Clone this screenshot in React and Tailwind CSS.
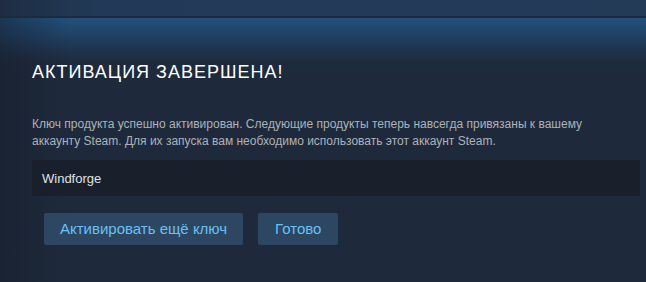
export default function App() {
  return (
    <div
      className="w-[646px] h-[282px] overflow-hidden bg-[#1e2a3c] flex flex-col"
      style={{ fontFamily: '"Liberation Sans", Arial, sans-serif' }}
    >
      <div className="h-[16px] shrink-0 bg-[linear-gradient(90deg,#1e2d44_0%,#223a57_15%,#233b57_100%)]" />
      <div className="h-[2px] shrink-0 bg-[#1a2b40]" />
      <div className="flex-1 flex flex-col bg-[linear-gradient(180deg,#21507a_0px,#20456a_14px,#1f3551_30px,#1e2b3e_44px,#1e2a3c_60px)]">
        <div className="flex-1 flex flex-col bg-[linear-gradient(90deg,rgba(20,26,38,0.45)_0px,rgba(20,26,38,0)_70px)]">
          <h1 className="mt-[44px] ml-[32px] text-[18px] leading-[20px] tracking-[1px] text-white font-normal">
            АКТИВАЦИЯ ЗАВЕРШЕНА!
          </h1>
          <p className="mt-[34px] ml-[32px] w-[580px] text-[12px] leading-[17px] text-[#acb2b8]">
            Ключ продукта успешно активирован. Следующие продукты теперь навсегда привязаны к вашему аккаунту Steam. Для их запуска вам необходимо использовать этот аккаунт Steam.
          </p>
          <div className="mt-[10px] ml-[32px] w-[608px] h-[36px] shrink-0 bg-[#19202c] flex items-center pl-[10px] pt-[1px] text-[13px] text-[#dfe3e6]">
            Windforge
          </div>
          <div className="mt-[17px] ml-[44px] flex gap-[15px]">
            <button className="h-[32px] px-[16px] rounded-[2px] bg-[#2d4763] text-[15px] text-[#67c1f5]">
              Активировать ещё ключ
            </button>
            <button className="h-[32px] px-[17px] rounded-[2px] bg-[#2d4763] text-[15px] text-[#67c1f5]">
              Готово
            </button>
          </div>
        </div>
      </div>
    </div>
  );
}
